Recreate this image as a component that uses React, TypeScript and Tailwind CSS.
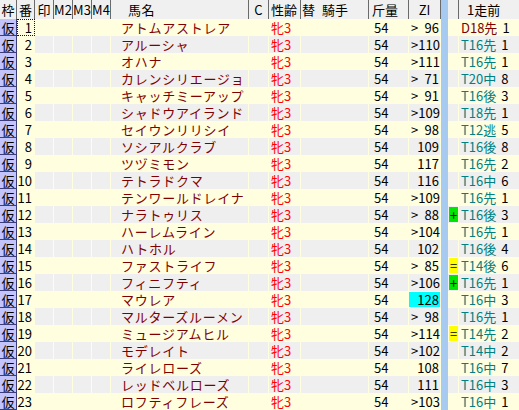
import React from "react";

type Row = { name: string; zi: string; mark: string; course: string; n: string };

const rows: Row[] = [
  { name: "アトムアストレア", zi: ">96", mark: "", course: "D18先", n: "1" },
  { name: "アルーシャ", zi: ">110", mark: "", course: "T16先", n: "1" },
  { name: "オハナ", zi: ">111", mark: "", course: "T16先", n: "1" },
  { name: "カレンシリエージョ", zi: ">71", mark: "", course: "T20中", n: "8" },
  { name: "キャッチミーアップ", zi: ">91", mark: "", course: "T16後", n: "3" },
  { name: "シャドウアイランド", zi: ">109", mark: "", course: "T18先", n: "1" },
  { name: "セイウンリリシイ", zi: ">98", mark: "", course: "T12逃", n: "5" },
  { name: "ソシアルクラブ", zi: "109", mark: "", course: "T16後", n: "8" },
  { name: "ツヅミモン", zi: "117", mark: "", course: "T16先", n: "2" },
  { name: "テトラドクマ", zi: "116", mark: "", course: "T16中", n: "6" },
  { name: "テンワールドレイナ", zi: ">109", mark: "", course: "T16先", n: "1" },
  { name: "ナラトゥリス", zi: ">88", mark: "+", course: "T16後", n: "3" },
  { name: "ハーレムライン", zi: ">104", mark: "", course: "T16先", n: "1" },
  { name: "ハトホル", zi: "102", mark: "", course: "T16後", n: "4" },
  { name: "ファストライフ", zi: ">85", mark: "=", course: "T14後", n: "6" },
  { name: "フィニフティ", zi: ">106", mark: "+", course: "T16先", n: "1" },
  { name: "マウレア", zi: "128", mark: "", course: "T16中", n: "3" },
  { name: "マルターズルーメン", zi: ">98", mark: "", course: "T16先", n: "1" },
  { name: "ミュージアムヒル", zi: ">114", mark: "=", course: "T14先", n: "2" },
  { name: "モデレイト", zi: ">102", mark: "", course: "T14中", n: "2" },
  { name: "ライレローズ", zi: "108", mark: "", course: "T16中", n: "7" },
  { name: "レッドベルローズ", zi: "111", mark: "", course: "T16中", n: "3" },
  { name: "ロフティフレーズ", zi: ">103", mark: "", course: "T16中", n: "1" },
];

function Header() {
  const h = "h-[19px] border-r border-[#6a6a6a] flex items-center shrink-0";
  return (
    <div className="flex h-[19px] bg-[#f0f0f0] text-black">
      <div className={`${h} w-[17px] justify-center`}>枠</div>
      <div className={`${h} w-[18px] justify-center`}>番</div>
      <div className={`${h} w-[19px] justify-center`}>印</div>
      <div className={`${h} w-[19px] justify-center`}>M2</div>
      <div className={`${h} w-[19px] justify-center`}>M3</div>
      <div className={`${h} w-[19px] justify-center`}>M4</div>
      <div className={`${h} w-[138px] pl-[17px] tracking-[0.5px]`}>馬名</div>
      <div className={`${h} w-[20px] justify-center`}>C</div>
      <div className={`${h} w-[32px] pl-[2px]`}>性齢</div>
      <div className={`${h} w-[68px] pl-[1px]`}>
        <span>替</span>
        <span className="ml-[7px]">騎手</span>
      </div>
      <div className={`${h} w-[40px] pl-[3px]`}>斤量</div>
      <div className={`${h} w-[32px] justify-center`}>ZI</div>
      <div className="h-[19px] w-[7px] shrink-0 bg-[#a6caf0]" />
      <div className={`${h} w-[11px]`} />
      <div className="h-[19px] w-[60px] shrink-0 flex items-center pl-[8px]">1走前</div>
    </div>
  );
}

function BodyRow({ r, i }: { r: Row; i: number }) {
  const even = i % 2 === 1;
  const bg = even ? "bg-[#efefef]" : "bg-[#ffffe0]";
  const c = "h-[17px] shrink-0 border-r border-[#ffffe0] flex items-center";
  const hasGt = r.zi.startsWith(">");
  const num = hasGt ? r.zi.slice(1) : r.zi;
  const cyan = r.zi === "128";
  return (
    <div className={`flex h-[17px] ${bg}`}>
      <div className="h-[17px] w-[17px] shrink-0 bg-[#c4c4fc] border-r border-b border-[#3c3c78] flex items-center justify-center text-black">
        仮
      </div>
      <div className={`${c} w-[18px] bg-[#ffffe0] justify-end pr-[2px] relative`}>
        {i === 0 && (
          <div className="absolute left-0 top-0 w-[18px] h-[17px] border border-dotted border-[#500000]" />
        )}
        {i + 1}
      </div>
      <div className={`${c} w-[19px]`} />
      <div className={`${c} w-[19px]`} />
      <div className={`${c} w-[19px]`} />
      <div className={`${c} w-[19px]`} />
      <div className={`${c} w-[138px] pl-[10px] text-[#800000] tracking-[0.75px]`}>{r.name}</div>
      <div className={`${c} w-[20px]`} />
      <div className={`${c} w-[32px] pl-[2px] text-[#ff0000]`}>牝3</div>
      <div className={`${c} w-[68px]`} />
      <div className={`${c} w-[40px] pl-[5px]`}>54</div>
      <div className={`${c} w-[32px] py-[1px]`}>
        <div
          className={`w-full h-full flex items-center justify-between pl-[2px] pr-[1px] ${
            cyan ? "bg-[#00ffff]" : ""
          }`}
        >
          <span>{hasGt ? ">" : ""}</span>
          <span>{num}</span>
        </div>
      </div>
      <div className="h-[17px] w-[7px] shrink-0 bg-[#a6caf0]" />
      <div className={`${c} w-[11px] pl-[1px] py-[1px]`}>
        {r.mark === "+" && (
          <div className="w-full h-full bg-[#00e600] flex items-center justify-center text-black">+</div>
        )}
        {r.mark === "=" && (
          <div className="w-full h-full bg-[#ffff00] flex items-center justify-center text-black">=</div>
        )}
      </div>
      <div className="h-[17px] w-[60px] shrink-0 flex items-center pl-[2px]">
        <span className={r.course.startsWith("D") ? "text-[#800000]" : "text-[#008080]"}>{r.course}</span>
        <span className="ml-[5px] text-black">{r.n}</span>
      </div>
    </div>
  );
}

export default function App() {
  return (
    <div className="w-[519px] h-[410px] overflow-hidden bg-[#ffffe0] text-[13px] leading-[17px] text-black font-['Noto_Sans_CJK_JP',sans-serif]">
      <Header />
      {rows.map((r, i) => (
        <BodyRow key={i} r={r} i={i} />
      ))}
    </div>
  );
}
